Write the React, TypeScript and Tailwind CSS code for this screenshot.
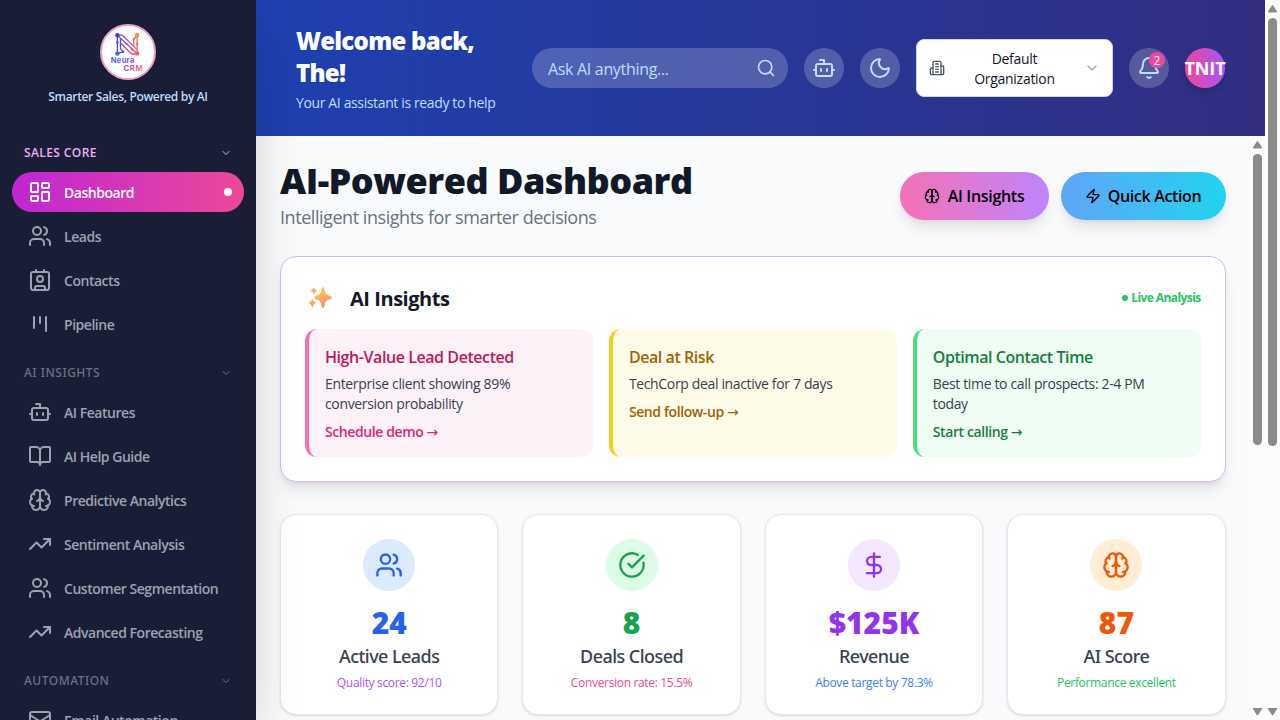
import type { ReactNode } from "react";
import {
  Bell, BookOpen, Bot, ChevronDown, CircleCheckBig, Contact, DollarSign,
  LayoutDashboard, Mail, Moon, Search, TrendingUp, Users, Zap,
} from "lucide-react";

type IconProps = { className?: string };

function Brain({ className }: IconProps) {
  return (
    <svg className={className} viewBox="0 0 24 24" fill="none" stroke="currentColor" strokeWidth="2" strokeLinecap="round" strokeLinejoin="round">
      <path d="M12 5a3 3 0 1 0-5.997.125 4 4 0 0 0-2.526 5.77 4 4 0 0 0 .556 6.588A4 4 0 1 0 12 18Z" />
      <path d="M12 5a3 3 0 1 1 5.997.125 4 4 0 0 1 2.526 5.77 4 4 0 0 1-.556 6.588A4 4 0 1 1 12 18Z" />
      <path d="M15 13a4.5 4.5 0 0 1-3-4 4.5 4.5 0 0 1-3 4" />
      <path d="M17.599 6.5a3 3 0 0 0 .399-1.375" />
      <path d="M6.003 5.125A3 3 0 0 0 6.401 6.5" />
      <path d="M3.477 10.896a4 4 0 0 1 .585-.396" />
      <path d="M19.938 10.5a4 4 0 0 1 .585.396" />
      <path d="M6 18a4 4 0 0 1-1.967-.516" />
      <path d="M19.967 17.484A4 4 0 0 1 18 18" />
    </svg>
  );
}

function Kanban({ className }: IconProps) {
  return (
    <svg className={className} viewBox="0 0 24 24" fill="none" stroke="currentColor" strokeWidth="2" strokeLinecap="round">
      <path d="M6 5v11M12 5v6M18 5v14" />
    </svg>
  );
}

function Building({ className }: IconProps) {
  return (
    <svg className={className} viewBox="0 0 24 24" fill="none" stroke="currentColor" strokeWidth="2" strokeLinecap="round" strokeLinejoin="round">
      <path d="M6 22V4a2 2 0 0 1 2-2h8a2 2 0 0 1 2 2v18Z" />
      <path d="M6 12H4a2 2 0 0 0-2 2v6a2 2 0 0 0 2 2h2" />
      <path d="M18 9h2a2 2 0 0 1 2 2v9a2 2 0 0 1-2 2h-2" />
      <path d="M10 6h4M10 10h4M10 14h4M10 18h4" />
    </svg>
  );
}

function Logo() {
  return (
    <svg className="size-13" viewBox="0 0 52 52">
      <defs>
        <linearGradient id="mark" gradientUnits="userSpaceOnUse" x1="14" y1="0" x2="36" y2="0">
          <stop offset="0" stopColor="#3b3fe8" />
          <stop offset="0.5" stopColor="#a45ac0" />
          <stop offset="1" stopColor="#fb6a4a" />
        </linearGradient>
        <linearGradient id="neura" x1="0" x2="1">
          <stop offset="0" stopColor="#2f6bf0" />
          <stop offset="1" stopColor="#a24fd0" />
        </linearGradient>
        <linearGradient id="crm" x1="0" x2="1">
          <stop offset="0" stopColor="#7a4fe0" />
          <stop offset="0.6" stopColor="#d557a0" />
          <stop offset="1" stopColor="#ff8a3c" />
        </linearGradient>
      </defs>
      <g stroke="url(#mark)" fill="none" strokeWidth="1.3">
        <path d="M15.4 9.2V28.4" />
        <path d="M35.1 9.2V27.4" />
        <path d="M15.4 9.2H20.5L35.1 23.6" />
        <path d="M16 10L35 27.5" />
        <path d="M18.5 12.6V22.5L21 25.8M15.4 27.6L21 25.8" />
        <path d="M18.5 17L29.5 28H35" />
        <path d="M35 9.5L31.8 13.2V20" />
      </g>
      <circle cx="15.4" cy="9.2" r="2.2" fill="#4338d8" />
      <circle cx="15.4" cy="27.6" r="2.2" fill="#2472f5" />
      <circle cx="15.4" cy="16.5" r="1.3" fill="#3658ea" />
      <circle cx="21" cy="25.8" r="1.3" fill="#5a45e0" />
      <circle cx="24.5" cy="17.5" r="1.1" fill="#9a55c8" />
      <circle cx="35.1" cy="9.2" r="2.2" fill="#ff8c32" />
      <circle cx="31.8" cy="13.4" r="1.3" fill="#ff7040" />
      <circle cx="35.1" cy="18" r="1.3" fill="#fa6a58" />
      <circle cx="30" cy="23.4" r="1.3" fill="#e05a80" />
      <circle cx="35.1" cy="27.4" r="2.2" fill="#f85a5a" />
      <text x="8.8" y="37.4" fontFamily="Inter, sans-serif" fontWeight="700" fontSize="7.6" textLength="23.5" fill="url(#neura)">Neura</text>
      <text x="21.600" y="44.9" fontFamily="Inter, sans-serif" fontWeight="700" fontSize="7.6" textLength="19" fill="url(#crm)">CRM</text>
    </svg>
  );
}

function Sparkles() {
  return (
    <svg className="size-6" viewBox="0 0 24 24">
      <defs>
        <linearGradient id="spark" x1="0.3" y1="0" x2="0.6" y2="1">
          <stop offset="0" stopColor="#fdcb52" />
          <stop offset="1" stopColor="#ff8a66" />
        </linearGradient>
      </defs>
      <g fill="url(#spark)">
        <path d="M15 1.200c.7 0 1 .5 1.200 1.200l1 3.500c.5 1.700 1.200 2.500 2.700 3.100l2.900 1.200c.8.3 1.200.7 1.200 1.300s-.4 1-1.200 1.300l-2.900 1.100c-1.500.6-2.200 1.500-2.700 3.200l-1 3.900c-.2.800-.5 1.200-1.200 1.200s-1-.4-1.200-1.200l-1-3.900c-.5-1.700-1.200-2.600-2.700-3.200l-2.900-1.100c-.8-.3-1.200-.7-1.200-1.300s.4-1 1.200-1.300l2.900-1.200c1.500-.6 2.200-1.400 2.700-3.100l1-3.500c.2-.7.5-1.200 1.200-1.200Z" />
        <path d="M5.800 1.100c.9 2.300 1.400 2.800 3.500 3.600-2.100.9-2.600 1.400-3.500 3.600-.9-2.200-1.400-2.700-3.500-3.600 2.100-.8 2.600-1.300 3.500-3.600Z" />
        <path d="M4.300 12.300c1.100 2.800 1.700 3.500 4.300 4.500-2.600 1.100-3.200 1.800-4.300 4.700-1.100-2.900-1.700-3.600-4.300-4.700 2.600-1 3.200-1.700 4.300-4.500Z" />
      </g>
    </svg>
  );
}

function SectionTitle({ children, active }: { children: ReactNode; active?: boolean }) {
  return (
    <div className={`mb-2 flex h-6 items-center justify-between px-3 text-xs ${active ? "font-semibold tracking-[0.4px] text-[#f0abfc]" : "font-['Noto_Sans'] font-medium tracking-[0.5px] text-[#6b7280]"}`}>
      <span className="pt-0.5">{children}</span>
      <ChevronDown className="mt-px size-3" />
    </div>
  );
}

function NavItem({ icon, label, active }: { icon: ReactNode; label: string; active?: boolean }) {
  return (
    <div className={`flex h-10 shrink-0 items-center gap-3 rounded-full px-4 text-sm font-semibold ${active ? "bg-linear-to-r/srgb from-[#c026d3] to-[#ec4899] text-white" : "text-[#9ca3af]"}`}>
      {icon}
      <span className="pt-0.5 tracking-[-0.47px] whitespace-nowrap">{label}</span>
      {active && <span className="-mr-1 ml-auto size-2 rounded-full bg-white" />}
    </div>
  );
}

function Sidebar() {
  return (
    <aside className="relative z-10 flex w-64 shrink-0 flex-col overflow-hidden bg-[#191e36] shadow-[0_25px_50px_-12px_rgba(0,0,0,0.25)]">
      <div className="flex h-[140px] shrink-0 flex-col items-center pt-6">
        <div className="flex size-14 items-center justify-center overflow-hidden rounded-full border-2 border-[#f0a0cc] bg-white">
          <Logo />
        </div>
        <div className="mt-2 text-xs leading-[18px] font-semibold tracking-[-0.34px] text-[#bfdbfe]">Smarter Sales, Powered by AI</div>
      </div>
      <nav className="flex flex-col gap-4 px-3">
        <section>
          <SectionTitle active>SALES CORE</SectionTitle>
          <div className="flex flex-col gap-1">
            <NavItem active icon={<LayoutDashboard className="size-6" />} label="Dashboard" />
            <NavItem icon={<Users className="size-6" />} label="Leads" />
            <NavItem icon={<Contact className="size-6" />} label="Contacts" />
            <NavItem icon={<Kanban className="size-6" />} label="Pipeline" />
          </div>
        </section>
        <section>
          <SectionTitle>AI INSIGHTS</SectionTitle>
          <div className="flex flex-col gap-1">
            <NavItem icon={<Bot className="size-6" />} label="AI Features" />
            <NavItem icon={<BookOpen className="size-6" />} label="AI Help Guide" />
            <NavItem icon={<Brain className="size-6" />} label="Predictive Analytics" />
            <NavItem icon={<TrendingUp className="size-6" />} label="Sentiment Analysis" />
            <NavItem icon={<Users className="size-6" />} label="Customer Segmentation" />
            <NavItem icon={<TrendingUp className="size-6" />} label="Advanced Forecasting" />
          </div>
        </section>
        <section>
          <SectionTitle>AUTOMATION</SectionTitle>
          <NavItem icon={<Mail className="size-6" />} label="Email Automation" />
        </section>
      </nav>
    </aside>
  );
}

function Header() {
  return (
    <header className="flex h-[136px] shrink-0 items-center gap-4 bg-linear-to-r/srgb from-[#1e40af] to-[#312e81] pr-[39px] pl-10">
      <div className="w-[220px] shrink-0 pt-px">
        <h1 className="text-2xl leading-8 font-extrabold tracking-[-0.72px] whitespace-nowrap text-white">Welcome back,<br />The!</h1>
        <p className="mt-1 text-sm tracking-[-0.37px] whitespace-nowrap text-[#bfdbfe]">Your AI assistant is ready to help</p>
      </div>
      <div className="flex h-10 w-64 shrink-0 items-center justify-between rounded-full bg-white/20 pr-3 pl-4 text-[#bfdbfe]">
        <span className="pt-0.5 text-base tracking-[-0.32px]">Ask AI anything...</span>
        <Search className="size-5" />
      </div>
      <div className="flex size-10 shrink-0 items-center justify-center rounded-full bg-white/20 text-[#bfdbfe]"><Bot className="size-6" /></div>
      <div className="flex size-10 shrink-0 items-center justify-center rounded-full bg-white/20 text-[#bfdbfe]"><Moon className="size-6" /></div>
      <div className="flex h-[58px] w-[197px] shrink-0 items-center rounded-lg border border-[#d1d5db] bg-white px-3">
        <Building className="size-4 text-[#4b5563]" />
        <span className="flex-1 pt-0.5 text-center text-sm tracking-[-0.28px] text-[#111827]">Default<br />Organization</span>
        <ChevronDown className="size-4 text-[#9ca3af]" />
      </div>
      <div className="relative flex size-10 shrink-0 items-center justify-center rounded-full bg-white/20 text-[#bfdbfe]">
        <Bell className="size-6" />
        <span className="absolute top-1 right-1 flex size-4 items-center justify-center rounded-full bg-[#ec4899] pt-px text-xs text-white">2</span>
      </div>
      <div className="flex size-10 shrink-0 items-center justify-center rounded-full bg-linear-to-r/srgb from-[#ec4899] to-[#a855f7] text-lg font-bold text-white shadow-[0_4px_6px_rgba(0,0,0,0.15)]">
        <span className="tracking-[-0.15px]">TNIT</span>
      </div>
    </header>
  );
}

function Insight({ title, body, action, box, titleColor, actionColor }: { title: string; body: ReactNode; action: string; box: string; titleColor: string; actionColor: string }) {
  return (
    <div className={`h-32 rounded-xl border-l-4 p-4 ${box}`}>
      <h3 className={`text-base font-semibold tracking-[-0.43px] whitespace-nowrap ${titleColor}`}>{title}</h3>
      <p className="mt-[5px] text-sm tracking-[-0.35px] whitespace-nowrap text-[#374151]">{body}</p>
      <p className={`mt-2 text-sm font-semibold tracking-[-0.4px] ${actionColor}`}>{action} <span className="font-['DejaVu_Sans'] font-normal leading-none">→</span></p>
    </div>
  );
}

function Stat({ icon, value, label, note, circle, valueColor, noteColor }: { icon: ReactNode; value: string; label: string; note: string; circle: string; valueColor: string; noteColor: string }) {
  return (
    <div className="flex h-[201px] flex-col items-center rounded-2xl border border-[#e5e7eb] bg-white pt-6 shadow-[0_1px_3px_rgba(0,0,0,0.1),0_1px_2px_-1px_rgba(0,0,0,0.1)]">
      <div className={`flex size-13 items-center justify-center rounded-full ${circle}`}>{icon}</div>
      <div className={`mt-[14px] text-3xl leading-9 font-extrabold ${valueColor}`}>{value}</div>
      <div className="mt-px font-['Noto_Sans'] text-lg leading-7 font-medium tracking-[-0.55px] text-[#374151]">{label}</div>
      <div className={`mt-[5px] text-xs leading-4 tracking-[-0.33px] ${noteColor}`}>{note}</div>
    </div>
  );
}

function Scrollbar({ thumb }: { thumb: string }) {
  return (
    <div className="flex w-[15.200px] shrink-0 flex-col items-center self-stretch bg-[#fcfcfc]">
      <svg className="mt-[4px] h-[10px] w-[11px] shrink-0" viewBox="0 0 11 10"><path d="M5.500 1.300L9.800 8H1.200Z" fill="#8b8b8b" stroke="#8b8b8b" strokeLinejoin="round" /></svg>
      <div className={`mt-1 w-[9px] shrink-0 rounded-full bg-[#8b8b8b] ${thumb}`} />
      <svg className="mt-auto mb-[3px] h-[10px] w-[11px] shrink-0" viewBox="0 0 11 10"><path d="M5.500 8.200L9.800 1.500H1.200Z" fill="#8b8b8b" stroke="#8b8b8b" strokeLinejoin="round" /></svg>
    </div>
  );
}

function Content() {
  return (
    <main className="min-w-0 flex-1 overflow-hidden bg-[#f9fafb] pt-6 pr-6 pl-6">
      <div className="flex h-[72px] items-center justify-between">
        <div>
          <h2 className="text-4xl leading-10 font-extrabold tracking-[-0.5px] whitespace-nowrap text-[#111827]">AI-Powered Dashboard</h2>
          <p className="mt-0.5 text-lg leading-7 tracking-[-0.45px] text-[#6b7280]">Intelligent insights for smarter decisions</p>
        </div>
        <div className="flex gap-3 font-semibold text-black">
          <div className="flex h-12 w-[149px] items-center gap-2 rounded-full bg-linear-to-r/srgb from-[#f472b6] to-[#c084fc] pl-6 shadow-[0_10px_15px_-3px_rgba(0,0,0,0.1),0_4px_6px_-4px_rgba(0,0,0,0.1)]">
            <Brain className="size-4" /><span className="tracking-[-0.3px] whitespace-nowrap">AI Insights</span>
          </div>
          <div className="flex h-12 w-[165px] items-center gap-[7px] rounded-full bg-linear-to-r/srgb from-[#60a5fa] to-[#22d3ee] pl-6 shadow-[0_10px_15px_-3px_rgba(0,0,0,0.1),0_4px_6px_-4px_rgba(0,0,0,0.1)]">
            <Zap className="size-4" /><span className="tracking-[-0.33px] whitespace-nowrap">Quick Action</span>
          </div>
        </div>
      </div>
      <section className="mt-6 h-[225.600px] rounded-2xl border border-[#d8b4fe] bg-white px-6 pt-6 shadow-[0_10px_15px_-3px_rgba(0,0,0,0.1),0_4px_6px_-4px_rgba(0,0,0,0.1)]">
        <div className="flex h-8 items-center">
          <div className="mt-0.5 ml-[3px]"><Sparkles /></div>
          <h2 className="ml-[18px] pt-1 text-xl font-bold tracking-[-0.45px] text-[#111827]">AI Insights</h2>
          <span className="ml-auto flex items-center gap-[3px] pt-0.5 text-xs font-bold text-[#22c55e]">
            <span className="size-1.5 rounded-full bg-[#22c55e]" /><span className="tracking-[-0.58px]">Live Analysis</span>
          </span>
        </div>
        <div className="mt-4 grid grid-cols-3 gap-4">
          <Insight title="High-Value Lead Detected" body={<>Enterprise client showing 89%<br />conversion probability</>} action="Schedule demo" box="border-[#f472b6] bg-[#fdf2f8]" titleColor="text-[#be185d]" actionColor="text-[#db2777]" />
          <Insight title="Deal at Risk" body="TechCorp deal inactive for 7 days" action="Send follow-up" box="border-[#facc15] bg-[#fefce8]" titleColor="text-[#a16207]" actionColor="text-[#a16207]" />
          <Insight title="Optimal Contact Time" body={<>Best time to call prospects: 2-4 PM<br />today</>} action="Start calling" box="border-[#4ade80] bg-[#f0fdf4]" titleColor="text-[#15803d]" actionColor="text-[#15803d]" />
        </div>
      </section>
      <div className="mt-8 grid grid-cols-4 gap-6">
        <Stat icon={<Users className="size-7" />} value="24" label="Active Leads" note="Quality score: 92/10" circle="bg-[#dbeafe] text-[#2563eb]" valueColor="text-[#2563eb]" noteColor="text-[#a855f7]" />
        <Stat icon={<CircleCheckBig className="size-7" />} value="8" label="Deals Closed" note="Conversion rate: 15.5%" circle="bg-[#dcfce7] text-[#16a34a]" valueColor="text-[#16a34a]" noteColor="text-[#ec4899]" />
        <Stat icon={<DollarSign className="size-7" />} value="$125K" label="Revenue" note="Above target by 78.3%" circle="bg-[#f3e8ff] text-[#9333ea]" valueColor="text-[#9333ea]" noteColor="text-[#3b82f6]" />
        <Stat icon={<Brain className="size-7" />} value="87" label="AI Score" note="Performance excellent" circle="bg-[#ffedd5] text-[#ea580c]" valueColor="text-[#ea580c]" noteColor="text-[#22c55e]" />
      </div>
    </main>
  );
}

export default function App() {
  return (
    <div className="flex h-screen w-full overflow-hidden font-['Open_Sans','Noto_Sans',sans-serif]">
      <Sidebar />
      <div className="flex min-w-0 flex-1 flex-col">
        <Header />
        <div className="flex min-h-0 flex-1">
          <Content />
          <Scrollbar thumb="h-[291px]" />
        </div>
      </div>
      <Scrollbar thumb="h-[428px]" />
    </div>
  );
}
